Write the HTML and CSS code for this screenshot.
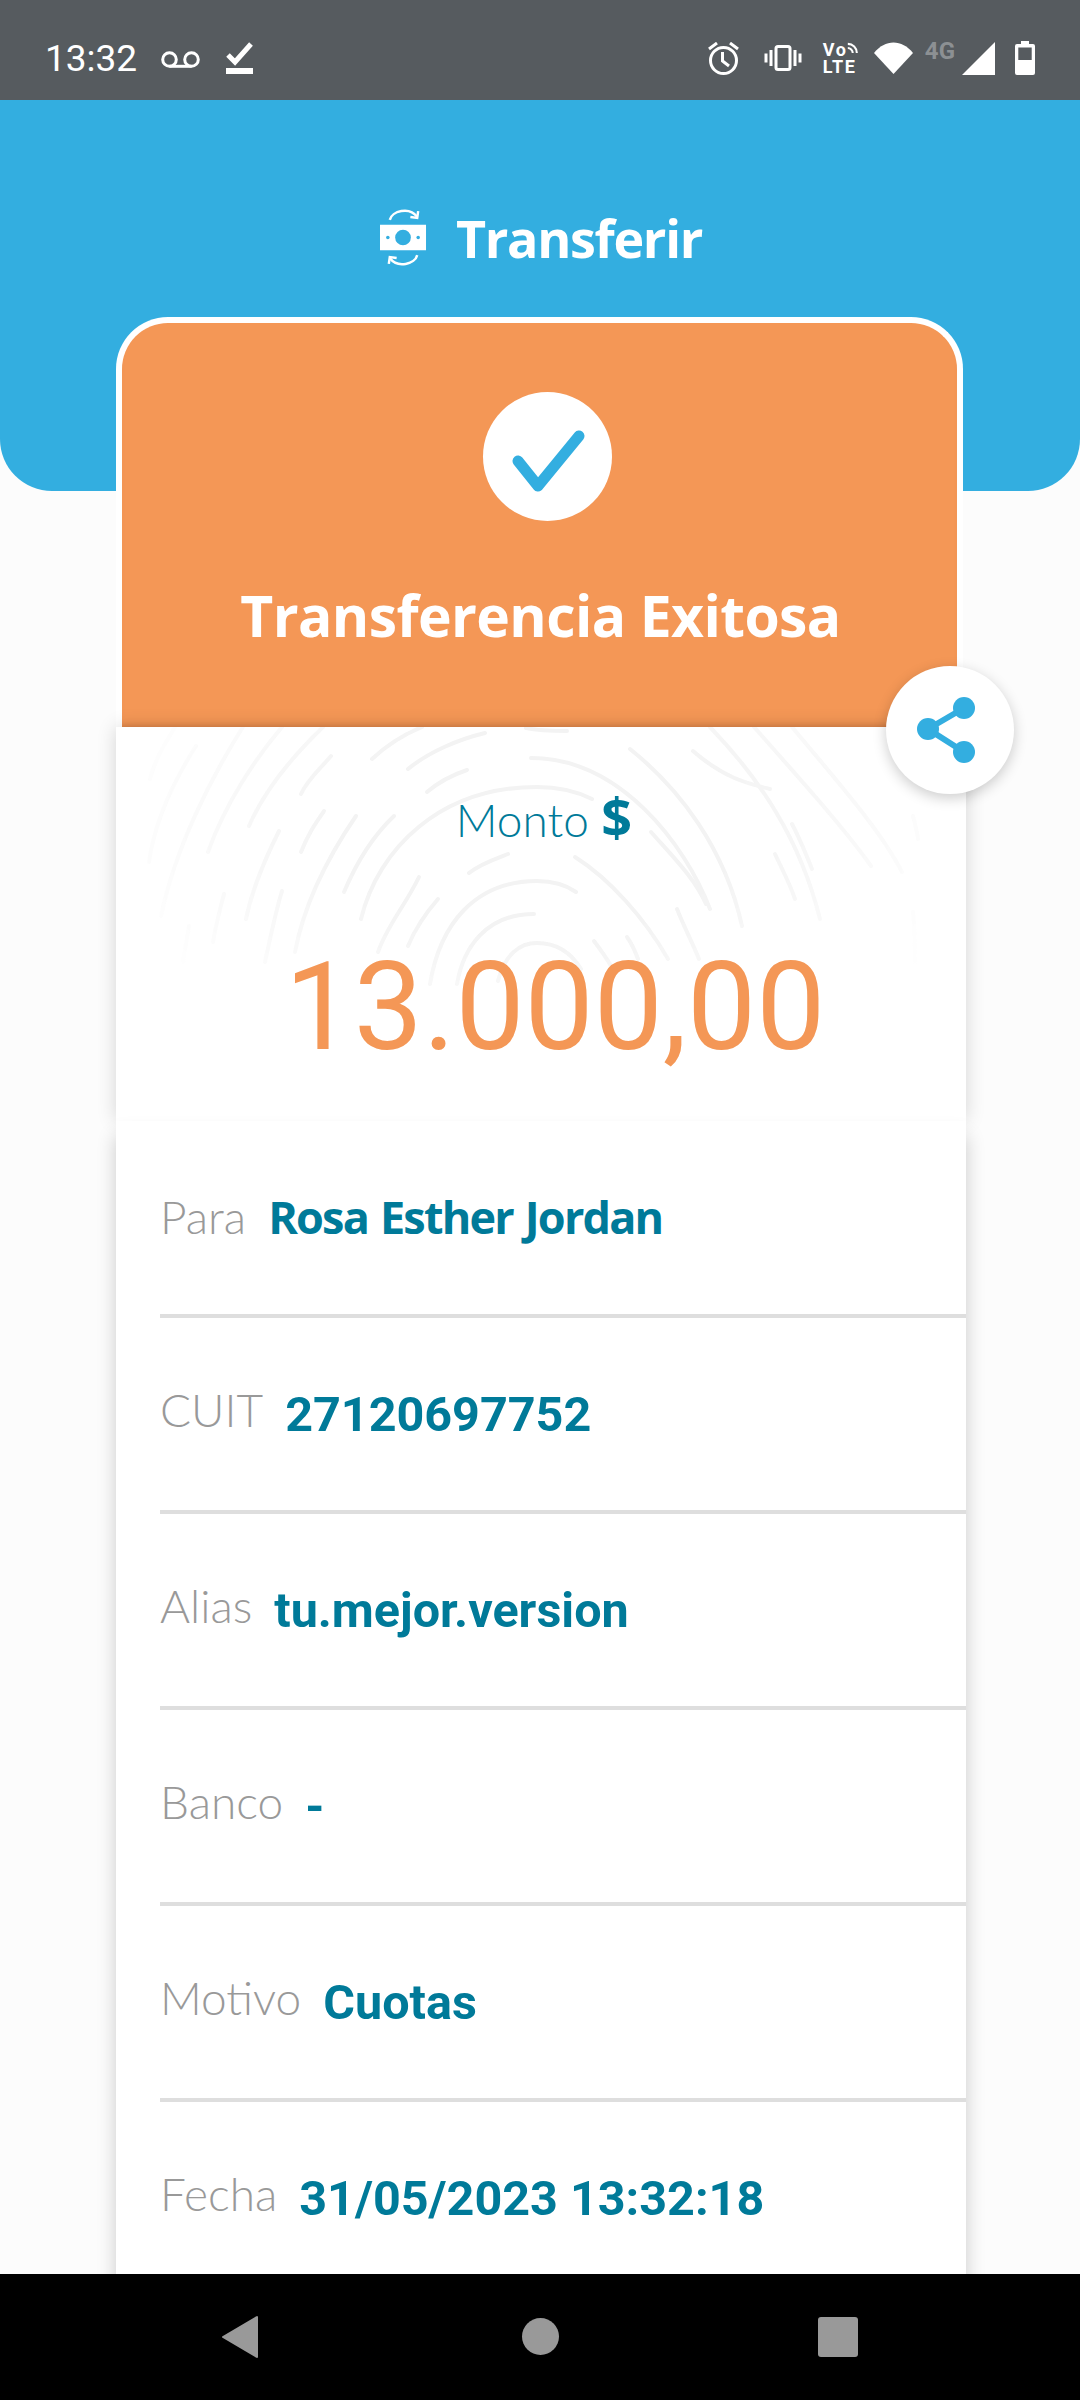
FILE: index.html
```html
<!DOCTYPE html>
<html lang="es">
<head>
  <meta charset="UTF-8" />
  <meta name="viewport" content="width=device-width, initial-scale=1.0"/>
  <title>Transferir</title>
  <link rel="stylesheet" href="styles.css">
</head>
<body>
  <div class="phone">
    <!-- Barra de estado -->
    <div class="status-bar">
      <div class="status-left">
        <span class="clock">13:32</span>
        <svg class="ic-voicemail" viewBox="0 0 39 17"><circle cx="8.500" cy="8.500" r="6.800"/><circle cx="30.500" cy="8.500" r="6.800"/><path d="M8.500 15.300h22"/></svg>
        <svg class="ic-task" viewBox="0 0 27 32"><path d="M2 13l7 7L25 2"/><path d="M0 29h27" class="thick"/></svg>
      </div>
      <div class="status-right">
        <svg class="ic-alarm" viewBox="0 0 31 33"><circle cx="15.500" cy="18.500" r="13"/><path d="M14.500 10v9l6.500 5"/><path d="M1 7l8-6M30 7l-8-6"/></svg>
        <svg class="ic-vibrate" viewBox="0 0 38 26"><rect x="12" y="1.500" width="14" height="23" rx="2"/><path d="M7 5v16M2 8.500v9M31 5v16M36 8.500v9"/></svg>
        <div class="volte">
          <div class="volte-top">Vo<svg viewBox="0 0 14 14"><path d="M1 2c6 0 11 5 11 11M1 7c3 0 6 3 6 6"/></svg></div>
          <div>LTE</div>
        </div>
        <svg class="ic-wifi" viewBox="0 0 39 32"><path d="M0 11C11 -3 28 -3 39 11L19.500 32z"/></svg>
        <span class="net">4G</span>
        <svg class="ic-signal" viewBox="0 0 33 33"><path d="M33 0v33H0z"/></svg>
        <svg class="ic-battery" viewBox="0 0 20 34"><path d="M6 0h8v3h4a2 2 0 0 1 2 2v27a2 2 0 0 1-2 2H2a2 2 0 0 1-2-2V5a2 2 0 0 1 2-2h4z"/><rect x="3.300" y="6.500" width="13.400" height="12.500" class="batt-empty"/></svg>
      </div>
    </div>

    <!-- Encabezado azul -->
    <div class="header">
      <div class="header-title">
        <svg class="ic-transfer" viewBox="0 0 48 60">
          <path d="M10 12C12 3 30 -2 38 9" class="arc"/>
          <path d="M39 3l-1 7-7-1" class="arc"/>
          <path d="M38 48c-2 9-20 14-28 3" class="arc"/>
          <path d="M9 57l1-7 7 1" class="arc"/>
          <path d="M0 17h47v26H0z" class="note"/>
          <circle cx="23.500" cy="30" r="8" class="hole"/>
          <circle cx="8" cy="30" r="1.800" class="hole"/>
          <circle cx="39" cy="30" r="1.800" class="hole"/>
        </svg>
        <span>Transferir</span>
      </div>
    </div>

    <div class="content">
      <div class="receipt">
        <div class="receipt-top">
          <div class="check-circle">
            <svg viewBox="0 0 74 64"><path d="M6 31l20 25L67 6"/></svg>
          </div>
          <div class="receipt-title">Transferencia Exitosa</div>
        </div>

        <button class="share">
          <svg viewBox="0 0 58 66"><path d="M47 11L11 32l36 23"/><circle cx="47" cy="11" r="11"/><circle cx="11" cy="32" r="11"/><circle cx="47" cy="55" r="11"/></svg>
        </button>

        <div class="amount-box">
          <svg class="fingerprint" viewBox="0 8 846 394">
            <defs>
              <radialGradient id="fade" gradientUnits="userSpaceOnUse" cx="417" cy="110" r="430" gradientTransform="translate(417 110) scale(1 .55) translate(-417 -110)">
                <stop offset="0.45" stop-color="#fff"/>
                <stop offset="1" stop-color="#111"/>
              </radialGradient>
              <mask id="fpMask" maskUnits="userSpaceOnUse" x="0" y="0" width="846" height="402"><rect width="846" height="402" fill="url(#fade)"/></mask>
            </defs>
            <g mask="url(#fpMask)">
              <!-- centro -->
              <path d="M378 262C385 235 400 224 417 224C435 224 450 232 461 250"/>
              <path d="M337 265C343 230 365 195 414 195"/>
              <path d="M310 265C320 205 355 162 417 162C432 162 446 166 456 173"/>
              <path d="M349 154C360 145 375 140 388 135"/>
              <path d="M455 138C490 160 525 200 548 240"/>
              <path d="M241 200C258 130 320 68 417 68C437 68 456 72 472 80"/>
              <path d="M224 173C238 140 255 115 274 97"/>
              <path d="M258 233C268 205 285 187 299 158"/>
              <path d="M288 227C295 210 305 195 318 180"/>
              <path d="M307 73C320 62 335 55 347 51"/>
              <path d="M288 50C310 32 340 20 365 14"/>
              <path d="M252 40C268 25 285 15 302 8"/>
              <path d="M406 9C420 12 435 12 447 12"/>
              <path d="M411 39C500 39 565 125 590 190"/>
              <path d="M510 30C560 70 605 130 622 207"/>
              <path d="M531 113C555 140 575 160 586 185"/>
              <path d="M557 190C565 210 573 225 579 240"/>
              <path d="M573 32C605 60 630 65 650 70"/>
              <path d="M590 8C640 60 680 120 700 200"/>
              <path d="M634 8C680 60 725 110 751 147"/>
              <path d="M672 8C715 60 760 110 782 153"/>
              <path d="M672 105C680 120 686 135 692 150"/>
              <path d="M655 135C662 150 670 165 675 180"/>
              <path d="M793 97C795 105 797 112 798 120"/>
              <path d="M474 222C480 230 486 238 491 247"/>
              <path d="M507 218C512 225 515 232 518 240"/>
              <path d="M793 193C795 210 795 225 795 243"/>
              <!-- izquierda -->
              <path d="M30 60C35 40 45 25 55 8"/>
              <path d="M29 143C35 100 55 60 76 27"/>
              <path d="M41 197C55 130 90 60 123 8"/>
              <path d="M88 133C105 85 135 40 162 8"/>
              <path d="M129 107C145 70 175 35 203 8"/>
              <path d="M181 75C188 60 200 50 211 37"/>
              <path d="M181 133C188 115 195 105 204 92"/>
              <path d="M126 200C132 170 145 140 159 112"/>
              <path d="M175 233C185 180 210 135 236 97"/>
              <path d="M93 223C96 205 100 190 104 175"/>
              <path d="M145 243C150 220 155 195 162 172"/>
              <path d="M63 243C65 230 67 220 69 207"/>
            </g>
          </svg>
          <div class="amount-label">Monto <b>$</b></div>
          <div class="amount">13.000,00</div>
        </div>

        <div class="rows">
          <div class="row"><span class="row-label">Para</span><span class="row-value name">Rosa Esther Jordan</span></div>
          <div class="row"><span class="row-label">CUIT</span><span class="row-value">27120697752</span></div>
          <div class="row"><span class="row-label">Alias</span><span class="row-value">tu.mejor.version</span></div>
          <div class="row"><span class="row-label">Banco</span><span class="row-value">-</span></div>
          <div class="row"><span class="row-label">Motivo</span><span class="row-value">Cuotas</span></div>
          <div class="row last"><span class="row-label">Fecha</span><span class="row-value">31/05/2023 13:32:18</span></div>
        </div>
      </div>
    </div>

    <!-- Barra de navegacion -->
    <div class="nav-bar">
      <svg class="nav-back" viewBox="0 0 38 44"><path d="M36 2v40L2 22z"/></svg>
      <div class="nav-home"></div>
      <div class="nav-recent"></div>
    </div>
  </div>
</body>
</html>
```

FILE: styles.css
```css
* {
  box-sizing: border-box;
}
html, body {
  margin: 0;
  padding: 0;
}
body {
  font-family: "Open Sans", sans-serif;
  background: #fcfcfc;
}
.phone {
  width: 1080px;
  height: 2400px;
  display: flex;
  flex-direction: column;
  overflow: hidden;
  position: relative;
}

/* Status bar */
.status-bar {
  height: 100px;
  background: #565b5f;
  color: white;
  display: flex;
  justify-content: space-between;
  align-items: center;
  padding: 16px 45px 0 45px;
  flex: none;
}
.status-left, .status-right {
  display: flex;
  align-items: center;
}
.clock {
  font-family: Roboto, sans-serif;
  font-size: 37px;
  margin-right: 24px;
}
.status-bar svg {
  fill: none;
  stroke: white;
}
.ic-voicemail {
  width: 39px;
  height: 17px;
  stroke-width: 3;
  margin: 2px 26px 0 0;
}
.ic-task {
  width: 27px;
  height: 32px;
  stroke-width: 5;
}
.ic-task .thick {
  stroke-width: 6;
}
.ic-alarm {
  width: 31px;
  height: 33px;
  stroke-width: 3;
  margin-right: 25px;
}
.ic-vibrate {
  width: 38px;
  height: 26px;
  stroke-width: 3;
  margin-right: 21px;
}
.volte {
  font-family: Roboto, sans-serif;
  font-size: 18px;
  font-weight: 700;
  line-height: 17px;
  width: 36px;
  margin-right: 15px;
  letter-spacing: 1.500px;
}
.volte-top {
  display: flex;
  align-items: flex-start;
}
.volte svg {
  width: 14px;
  height: 14px;
  stroke-width: 2.500;
}
.status-bar .ic-wifi {
  width: 39px;
  height: 32px;
  fill: white;
  stroke: none;
  margin-right: 12px;
}
.net {
  font-family: Roboto, sans-serif;
  font-size: 24px;
  font-weight: 700;
  color: #8c9093;
  align-self: flex-start;
  margin: -4px 7px 0 0;
  line-height: 28px;
}
.status-bar .ic-signal {
  width: 33px;
  height: 33px;
  fill: white;
  stroke: none;
  margin-right: 20px;
}
.status-bar .ic-battery {
  width: 20px;
  height: 34px;
  fill: white;
  stroke: none;
}
.status-bar .batt-empty {
  fill: #565b5f;
}

/* Header */
.header {
  height: 391px;
  background: #33aee0;
  border-radius: 0 0 52px 52px;
  flex: none;
}
.header-title {
  display: flex;
  justify-content: center;
  align-items: center;
  gap: 29px;
  padding-top: 108px;
  margin-left: 2px;
  color: white;
  font-size: 52px;
  font-weight: 700;
  letter-spacing: -1.300px;
  line-height: 55px;
}
.ic-transfer {
  width: 47px;
  height: 59px;
}
.ic-transfer .arc {
  fill: none;
  stroke: white;
  stroke-width: 2.500;
}
.ic-transfer .note {
  fill: white;
}
.ic-transfer .hole {
  fill: #33aee0;
}

/* Receipt card */
.content {
  position: absolute;
  top: 317px;
  left: 116px;
  width: 850px;
}
.receipt {
  position: relative;
}
.receipt-top {
  width: 847px;
  height: 410px;
  background: #f49756;
  border: 6px solid white;
  border-bottom: none;
  border-radius: 52px 52px 0 0;
  display: flex;
  flex-direction: column;
  align-items: center;
  padding-top: 69px;
  box-shadow: inset 0 -6px 6px -5px rgba(180,100,50,0.5);
}
.check-circle {
  width: 129px;
  height: 129px;
  background: white;
  border-radius: 50%;
  display: flex;
  justify-content: center;
  align-items: center;
  margin-left: 15px;
  flex: none;
}
.check-circle svg {
  width: 74px;
  height: 64px;
  margin: 11px 0 0 3px;
  fill: none;
  stroke: #33aee0;
  stroke-width: 11;
  stroke-linecap: round;
  stroke-linejoin: round;
}
.receipt-title {
  margin-top: 57px;
  color: white;
  font-size: 57px;
  font-weight: 700;
  letter-spacing: -0.600px;
  line-height: 75px;
  margin-left: 2px;
  white-space: nowrap;
}
.share {
  position: absolute;
  top: 349px;
  left: 770px;
  width: 128px;
  height: 128px;
  border: none;
  border-radius: 50%;
  background: white;
  box-shadow: 0 4px 14px rgba(0,0,0,0.2);
  z-index: 2;
  padding: 0;
  display: flex;
  justify-content: center;
  align-items: center;
}
.share svg {
  width: 58px;
  height: 66px;
  margin-right: 8px;
  fill: #33aee0;
}
.share svg path {
  fill: none;
  stroke: #33aee0;
  stroke-width: 6;
}
.amount-box {
  position: relative;
  height: 394px;
  background: white;
  box-shadow: 0 0 18px rgba(0,0,0,0.16);
  text-align: center;
}
.fingerprint {
  position: absolute;
  top: 0;
  left: 4px;
  width: 846px;
  height: 394px;
  fill: none;
  stroke: #f3f3f3;
  stroke-width: 4;
  stroke-linecap: round;
}
.amount-label {
  position: relative;
  padding-top: 64px;
  margin-left: 6px;
  color: #007a99;
  font-family: Lato, sans-serif;
  font-size: 46px;
  font-weight: 300;
  line-height: 58px;
}
.amount-label b {
  font-family: "Open Sans", sans-serif;
  font-size: 54px;
  font-weight: 700;
  line-height: 40px;
}
.amount {
  position: relative;
  margin-top: 86px;
  margin-left: 28px;
  color: #f49756;
  font-family: Roboto, sans-serif;
  font-size: 123px;
  line-height: 144px;
}
.rows {
  position: relative;
  background: white;
  padding: 1px 0 0 44px;
  box-shadow: 0 14px 18px rgba(0,0,0,0.2);
}
.row {
  height: 196px;
  border-bottom: 4px solid #dedede;
  padding-top: 64px;
  white-space: nowrap;
}
.row.last {
  border-bottom: none;
}
.row-label {
  color: #999;
  font-family: Lato, sans-serif;
  font-size: 46px;
  font-weight: 300;
  margin-right: 22px;
}
.row-value {
  color: #007a99;
  font-family: Roboto, sans-serif;
  font-size: 48.500px;
  font-weight: 700;
  vertical-align: -4px;
}
.row-value.name {
  font-family: "Open Sans", sans-serif;
  font-size: 45px;
  letter-spacing: -1.800px;
  word-spacing: 2px;
  vertical-align: baseline;
}

/* Nav bar */
.nav-bar {
  position: absolute;
  left: 0;
  bottom: 0;
  width: 100%;
  height: 126px;
  background: black;
}
.nav-back, .nav-home, .nav-recent {
  position: absolute;
}
.nav-back {
  left: 221px;
  top: 41px;
  width: 38px;
  height: 44px;
  fill: #999;
  stroke: #999;
  stroke-width: 2;
  stroke-linejoin: round;
}
.nav-home {
  left: 522px;
  top: 44px;
  width: 37px;
  height: 37px;
  border-radius: 50%;
  background: #999;
}
.nav-recent {
  left: 818px;
  top: 43px;
  width: 40px;
  height: 40px;
  border-radius: 3px;
  background: #999;
}
```
